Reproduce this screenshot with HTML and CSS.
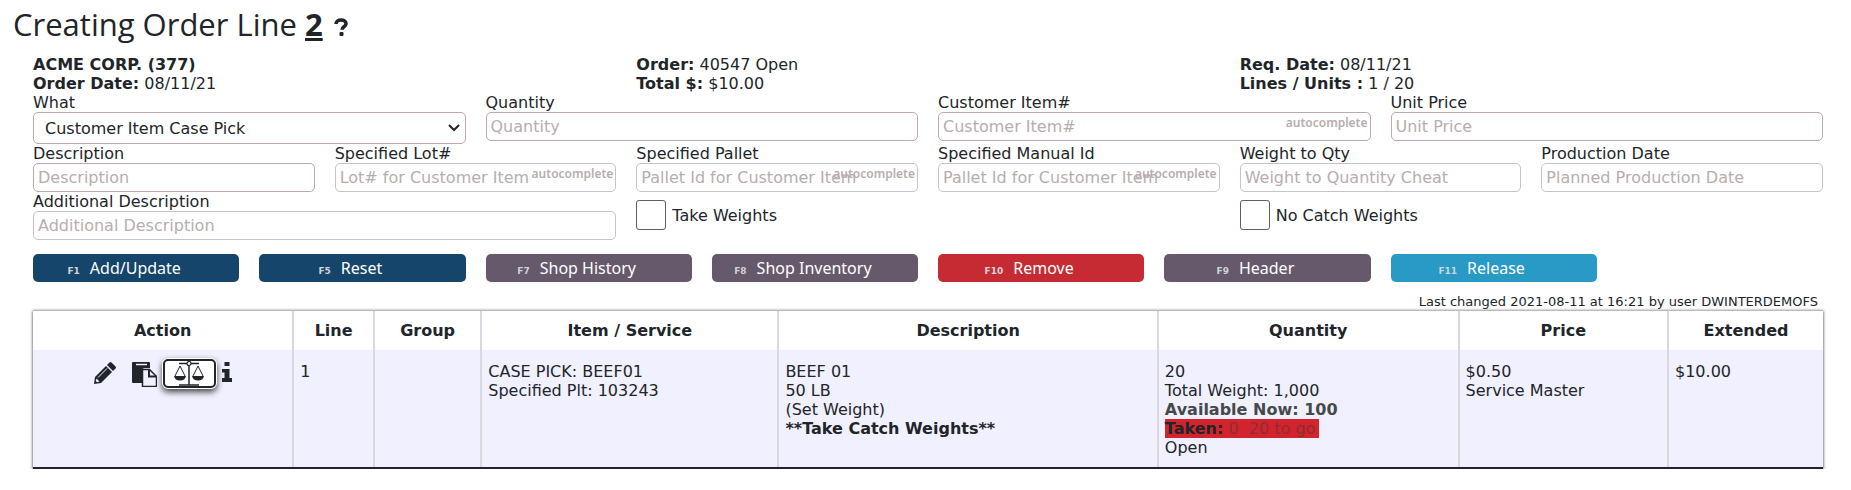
FILE: index.html
```html
<!DOCTYPE html>
<html lang="en">
<head>
  <meta charset="UTF-8">
  <title>Creating Order Line</title>
  <meta name="viewport" content="width=device-width, initial-scale=1.0">
  <link rel="stylesheet" href="styles.css">
</head>
<body>
  <h1>Creating Order Line <b class="line-no">2</b> <a class="help" href="#" aria-label="Help"><svg viewBox="0 0 14 18" aria-hidden="true"><path d="M2 6C2 3.500 4.200 2 7 2s5 1.300 5 3.700c0 3-4 3-4 6" fill="none" stroke="currentColor" stroke-width="3.600"/><rect x="5.500" y="14" width="4" height="4" rx="1" fill="currentColor"/></svg></a></h1>

  <main>
    <div class="info">
      <div><b>ACME CORP. (377)</b><br><b>Order Date:</b> 08/11/21</div>
      <div><b>Order:</b> 40547 Open<br><b>Total $:</b> $10.00</div>
      <div><b>Req. Date:</b> 08/11/21<br><b>Lines / Units :</b> 1 / 20</div>
    </div>

    <form>
      <div class="row four">
        <div class="field required">
          <label for="what">What</label>
          <div class="select-box">
            <select id="what"><option>Customer Item Case Pick</option></select>
            <svg class="chevron" viewBox="0 0 12 8" aria-hidden="true"><path d="M1 1l5 5 5-5" fill="none" stroke="#212529" stroke-width="2"/></svg>
          </div>
        </div>
        <div class="field required">
          <label for="quantity">Quantity</label>
          <input type="text" id="quantity" placeholder="Quantity">
        </div>
        <div class="field required">
          <label for="item">Customer Item#</label>
          <input type="text" id="item" placeholder="Customer Item#">
          <span class="auto">autocomplete</span>
        </div>
        <div class="field required">
          <label for="price">Unit Price</label>
          <input type="text" id="price" placeholder="Unit Price">
        </div>
      </div>

      <div class="row six">
        <div class="field required">
          <label for="description">Description</label>
          <input type="text" id="description" placeholder="Description">
        </div>
        <div class="field">
          <label for="lot">Specified Lot#</label>
          <input type="text" id="lot" placeholder="Lot# for Customer Item">
          <span class="auto">autocomplete</span>
        </div>
        <div class="field">
          <label for="pallet">Specified Pallet</label>
          <input type="text" id="pallet" placeholder="Pallet Id for Customer Item">
          <span class="auto">autocomplete</span>
        </div>
        <div class="field">
          <label for="manual">Specified Manual Id</label>
          <input type="text" id="manual" placeholder="Pallet Id for Customer Item">
          <span class="auto">autocomplete</span>
        </div>
        <div class="field">
          <label for="weight">Weight to Qty</label>
          <input type="text" id="weight" placeholder="Weight to Quantity Cheat">
        </div>
        <div class="field">
          <label for="production">Production Date</label>
          <input type="text" id="production" placeholder="Planned Production Date">
        </div>
      </div>

      <div class="row six">
        <div class="field wide">
          <label for="additional">Additional Description</label>
          <input type="text" id="additional" placeholder="Additional Description">
        </div>
        <div class="check wide">
          <input type="checkbox" id="take"><label for="take">Take Weights</label>
        </div>
        <div class="check wide">
          <input type="checkbox" id="nocatch"><label for="nocatch">No Catch Weights</label>
        </div>
      </div>

      <div class="buttons">
        <button type="button" class="navy"><small>F1</small>Add/Update</button>
        <button type="button" class="navy"><small>F5</small>Reset</button>
        <button type="button" class="plum"><small>F7</small>Shop History</button>
        <button type="button" class="plum"><small>F8</small>Shop Inventory</button>
        <button type="button" class="red"><small>F10</small>Remove</button>
        <button type="button" class="plum"><small>F9</small>Header</button>
        <button type="button" class="blue"><small>F11</small>Release</button>
      </div>
    </form>

    <p class="changed">Last changed 2021-08-11 at 16:21 by user DWINTERDEMOFS</p>

    <table>
      <colgroup>
        <col class="c-action"><col class="c-line"><col class="c-group"><col class="c-item">
        <col class="c-desc"><col class="c-qty"><col class="c-price"><col class="c-ext">
      </colgroup>
      <thead>
        <tr>
          <th>Action</th>
          <th>Line</th>
          <th>Group</th>
          <th>Item / Service</th>
          <th>Description</th>
          <th>Quantity</th>
          <th>Price</th>
          <th>Extended</th>
        </tr>
      </thead>
      <tbody>
        <tr>
          <td>
            <div class="actions">
              <a class="edit" href="#" aria-label="Edit"><svg width="22" height="22" viewBox="0 0 22 22" aria-hidden="true"><path d="M0 22l1-7L12 4l6 6L7 21z" fill="#212529"/><path d="M13 3l2.500-2.500q1-1 2 0l4 4q1 1 0 2L19 9z" fill="#212529"/><path d="M4 15.500L13 6.500" stroke="#f0f0ff" stroke-width="1"/><path d="M2.500 16.500l3 3-2.500.8-1.200-1.200z" fill="#f0f0ff"/></svg></a>
              <a class="copy" href="#" aria-label="Copy"><svg width="25" height="25" viewBox="0 0 25 25" aria-hidden="true"><path d="M1 0h16q1 0 1 1v5h-5q-3 0-3 3v12H1q-1 0-1-1V1q0-1 1-1z" fill="#212529"/><path d="M4 2.500h11" stroke="#f0f0ff" stroke-width="1.500"/><path d="M10.500 7.500h7l7 7v10h-14z" fill="#f0f0ff" stroke="#212529" stroke-width="1.500"/><path d="M17 7.500v7h7.500" fill="none" stroke="#212529" stroke-width="2"/></svg></a>
              <button type="button" class="scales" aria-label="Catch weights"><svg width="34" height="25" viewBox="0 0 34 25" aria-hidden="true"><g fill="none" stroke="#212529"><path d="M7 2.500h8M19 2.500h8" stroke-width="1.500"/><circle cx="17" cy="2.500" r="2" stroke-width="1.200"/><path d="M17 4.500V24" stroke-width="1.500"/><path d="M7 24h20" stroke-width="1.500"/><path d="M8 5L3 15M8 5l5 10M26 5l-5 10M26 5l5 10"/></g><path d="M2 15h12q-1 4.500-6 4.500T2 15zM20 15h12q-1 4.500-6 4.500T20 15z" fill="#212529"/></svg></button>
              <a class="about" href="#" aria-label="Info"><svg width="10" height="20" viewBox="0 0 10 20" aria-hidden="true"><path d="M2.500 0h5v4h-5zM0 7h7.500v9H10v4H0v-4h2.500v-5.500H0z" fill="#212529"/></svg></a>
            </div>
          </td>
          <td>1</td>
          <td></td>
          <td>CASE PICK: BEEF01<br>Specified Plt: 103243</td>
          <td>BEEF 01<br>50 LB<br>(Set Weight)<br><b>**Take Catch Weights**</b></td>
          <td>20<br>Total Weight: 1,000<br><b class="available">Available Now: 100</b><br><span class="taken"><b>Taken:</b> <span class="togo">0&nbsp; 20 to go</span></span><br>Open</td>
          <td>$0.50<br>Service Master</td>
          <td>$10.00</td>
        </tr>
      </tbody>
    </table>
  </main>
</body>
</html>
```
FILE: styles.css
```css
* { box-sizing: border-box; }

body {
  margin: 0;
  background: white;
  color: #212529;
  font-family: Verdana, 'DejaVu Sans', sans-serif;
  font-size: 16px;
  line-height: 19px;
}

h1 {
  margin: 0;
  padding: 4px 13px 11px;
  font-family: 'Open Sans', sans-serif;
  font-size: 31px;
  font-weight: 400;
  line-height: 40px;
}

.line-no { font-weight: 700; text-decoration: underline; }
.help { margin-left: 3px; color: #212529; }
.help svg { width: 14px; height: 18px; }

main { padding: 0 28px 0 33px; }

.info {
  display: grid;
  grid-template-columns: repeat(3, 1fr);
  column-gap: 20px;
  margin-bottom: 1px;
}

.row {
  display: grid;
  column-gap: 20px;
  margin-bottom: 1px;
}
.four { grid-template-columns: repeat(4, 1fr); }
.six { grid-template-columns: repeat(6, 1fr); }
.wide { grid-column: span 2; }

.field { position: relative; min-width: 0; }
.field label { display: block; line-height: 18px; white-space: nowrap; }

.field input, .field select {
  display: block;
  width: 100%;
  height: 29px;
  padding: 0 4px;
  border: 1px solid #c4c4c8;
  border-radius: 5px;
  background: white;
  color: #212529;
  font: inherit;
}
.required input, .required select { border-color: #bda9a9; }
.field select {
  height: 32px;
  padding: 0 11px;
  appearance: none;
}
.field input::placeholder { color: #b8adad; opacity: 1; }

.select-box { position: relative; }
.chevron {
  position: absolute;
  right: 6px;
  top: 12px;
  width: 12px;
  height: 8px;
  pointer-events: none;
}

.auto {
  position: absolute;
  right: 3px;
  top: 19px;
  color: #b8adad;
  font-family: 'Noto Sans', sans-serif;
  font-size: 12px;
  font-weight: 600;
}

.check {
  display: flex;
  align-items: center;
  align-self: start;
  gap: 6px;
  margin-top: 7px;
}
.check input {
  appearance: none;
  width: 30px;
  height: 30px;
  margin: 0;
  border: 1px solid #66596b;
  border-radius: 3px;
}

.buttons {
  display: grid;
  grid-template-columns: repeat(8, 1fr);
  column-gap: 20px;
  margin-top: 14px;
}
.buttons button {
  height: 28px;
  padding: 0 24px 0 0;
  border: none;
  border-radius: 5px;
  color: white;
  font-family: 'Noto Sans', sans-serif;
  font-size: 16px;
  white-space: nowrap;
  cursor: pointer;
}
.buttons small {
  margin-right: 10px;
  color: #cfd4d8;
  font-family: Verdana, 'DejaVu Sans', sans-serif;
  font-size: 9px;
  font-weight: 700;
}
.navy { background: #16456b; }
.plum { background: #66596b; }
.red { background: #c62b33; }
.blue { background: #2999c6; }

.changed {
  margin: 12px 0 0;
  padding-right: 5px;
  font-size: 13px;
  line-height: 16px;
  text-align: right;
}

table {
  width: 100%;
  table-layout: fixed;
  border-collapse: separate;
  border-spacing: 0;
  border-top: 1px solid #bbb;
  border-bottom: 2px solid #212529;
  box-shadow: 0 1px 3px #212529;
}
.c-action { width: 14.6%; }
.c-line { width: 4.5%; }
.c-group { width: 6%; }
.c-item { width: 16.6%; }
.c-desc { width: 21.2%; }
.c-qty { width: 16.8%; }
.c-price { width: 11.7%; }
.c-ext { width: 8.6%; }

th, td { border-right: 2px solid #d8d8df; }
th:last-child, td:last-child { border-right: none; }
th { height: 39px; padding: 0; background: white; }
td {
  height: 117px;
  padding: 12px 6px 10px;
  background: #f0f0ff;
  vertical-align: top;
}

.actions {
  display: flex;
  justify-content: center;
  gap: 6px;
}
.actions svg { display: block; }
.edit { margin-right: 10px; }
.scales {
  display: flex;
  align-items: center;
  justify-content: center;
  width: 53px;
  height: 29px;
  margin-top: -3px;
  padding: 0;
  border: 2px solid #212529;
  border-radius: 5px;
  background: white;
  box-shadow: 0 0 0 1px white, 0 3px 6px 1px #444;
  cursor: pointer;
}

.available { color: #444a4a; }
.taken { padding-right: 4px; background: #d3242e; }
.togo { color: #8f2c33; }
```
